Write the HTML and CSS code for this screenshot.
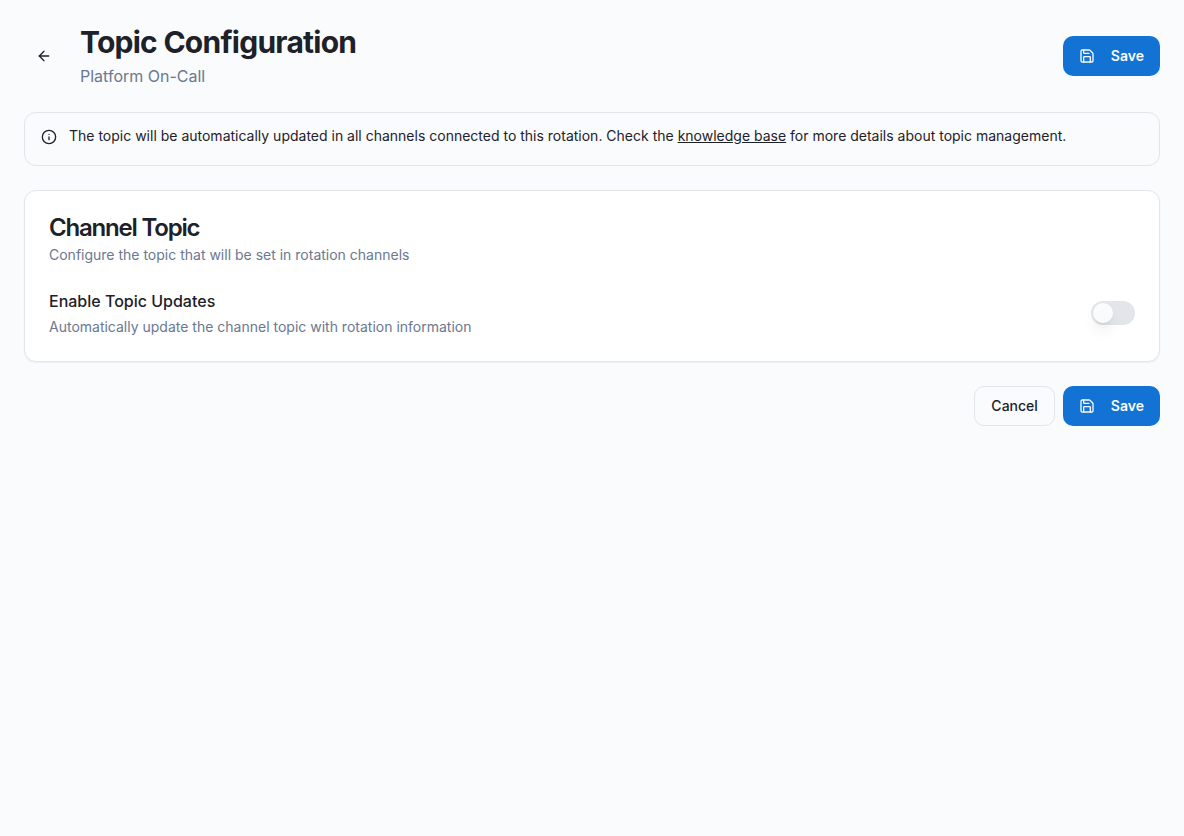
FILE: index.html
```html
<!DOCTYPE html>
<html lang="en">
  <head>
    <meta charset="UTF-8" />
    <title>Topic Configuration</title>
    <link rel="stylesheet" href="styles.css">
  </head>

  <body>
    <main class="page">
      <header class="header">
        <button type="button" class="btn-back" aria-label="Back">
          <svg class="icon" viewBox="0 0 24 24"><path d="m12 19-7-7 7-7" /><path d="M19 12H5" /></svg>
        </button>
        <div class="heading">
          <h1>Topic Configuration</h1>
          <p>Platform On-Call</p>
        </div>
        <button type="button" class="btn btn-primary">
          <svg class="icon" viewBox="0 0 24 24"><path d="M15.2 3a2 2 0 0 1 1.4.6l3.8 3.8a2 2 0 0 1 .6 1.4V19a2 2 0 0 1-2 2H5a2 2 0 0 1-2-2V5a2 2 0 0 1 2-2z" /><path d="M17 21v-7a1 1 0 0 0-1-1H8a1 1 0 0 0-1 1v7" /><path d="M7 3v4a1 1 0 0 0 1 1h7" /></svg>
          Save
        </button>
      </header>

      <div class="alert">
        <svg class="icon" viewBox="0 0 24 24"><circle cx="12" cy="12" r="10" /><path d="M12 16v-4" /><path d="M12 8h.01" /></svg>
        <p>The topic will be automatically updated in all channels connected to this rotation. Check the <a href="#">knowledge base</a> for more details about topic management.</p>
      </div>

      <section class="card">
        <h2>Channel Topic</h2>
        <p class="hint">Configure the topic that will be set in rotation channels</p>
        <div class="setting">
          <div class="setting-text">
            <label for="topic-updates">Enable Topic Updates</label>
            <p class="hint">Automatically update the channel topic with rotation information</p>
          </div>
          <input type="checkbox" role="switch" class="switch" id="topic-updates">
        </div>
      </section>

      <div class="actions">
        <button type="button" class="btn btn-outline">Cancel</button>
        <button type="button" class="btn btn-primary">
          <svg class="icon" viewBox="0 0 24 24"><path d="M15.2 3a2 2 0 0 1 1.4.6l3.8 3.8a2 2 0 0 1 .6 1.4V19a2 2 0 0 1-2 2H5a2 2 0 0 1-2-2V5a2 2 0 0 1 2-2z" /><path d="M17 21v-7a1 1 0 0 0-1-1H8a1 1 0 0 0-1 1v7" /><path d="M7 3v4a1 1 0 0 0 1 1h7" /></svg>
          Save
        </button>
      </div>
    </main>
  </body>
</html>
```

FILE: styles.css
```css
* {
  box-sizing: border-box;
}

body,
h1,
h2,
p {
  margin: 0;
}

body {
  background: #fafbfd;
  color: #1d2129;
  font: 14px/20px Inter, "Liberation Sans", sans-serif;
}

button {
  font: inherit;
  cursor: pointer;
}

.page {
  display: flex;
  flex-direction: column;
  gap: 24px;
  padding: 24px;
}

.icon {
  flex: none;
  width: 16px;
  height: 16px;
  fill: none;
  stroke: currentColor;
  stroke-width: 2;
  stroke-linecap: round;
  stroke-linejoin: round;
}

.header {
  display: flex;
  align-items: center;
  gap: 16px;
}

.heading {
  flex: 1;
}

.heading h1 {
  font-size: 30px;
  line-height: 36px;
  font-weight: 700;
  letter-spacing: -0.025em;
}

.heading p {
  margin-top: 4px;
  font-size: 16px;
  line-height: 24px;
  color: #6b7890;
}

.btn-back {
  display: flex;
  align-items: center;
  justify-content: center;
  width: 40px;
  height: 40px;
  padding: 0;
  border: 0;
  border-radius: 10px;
  background: none;
  color: inherit;
}

.btn {
  display: flex;
  align-items: center;
  gap: 16px;
  height: 40px;
  padding: 0 16px;
  border: 0;
  border-radius: 10px;
  font-weight: 500;
}

.btn-primary {
  background: #1273d4;
  color: #fafbfd;
  font-weight: 600;
}

.btn-outline {
  border: 1px solid #e2e5e9;
  background: #fafbfd;
  color: inherit;
}

.alert {
  display: flex;
  gap: 12px;
  padding: 12px 16px 18px;
  border: 1px solid #e2e5e9;
  border-radius: 12px;
  line-height: 22px;
}

.alert .icon {
  margin-top: 4px;
}

.alert a {
  color: inherit;
  text-decoration: underline;
}

.card {
  padding: 24px;
  border: 1px solid #e2e5e9;
  border-radius: 12px;
  background: #fff;
  box-shadow: 0 1px 2px rgba(0, 0, 0, 0.05);
}

.card h2 {
  font-size: 24px;
  line-height: 26px;
  font-weight: 600;
  letter-spacing: -0.05em;
}

.hint {
  margin-top: 4px;
  color: #6b7890;
}

.setting {
  display: flex;
  align-items: center;
  justify-content: space-between;
  margin-top: 24px;
}

.setting label {
  font-size: 16px;
  line-height: 24px;
  font-weight: 500;
}

.switch {
  appearance: none;
  flex: none;
  width: 44px;
  height: 24px;
  margin: 0;
  padding: 2px;
  border-radius: 12px;
  background: #e2e5e9;
  cursor: pointer;
}

.switch::before {
  content: "";
  display: block;
  width: 20px;
  height: 20px;
  border-radius: 50%;
  background: #fafbfd;
  box-shadow: 0 10px 15px -3px rgba(0, 0, 0, 0.1), 0 4px 6px -4px rgba(0, 0, 0, 0.1);
}

.switch:checked {
  background: #1273d4;
}

.switch:checked::before {
  margin-left: 20px;
}

.actions {
  display: flex;
  justify-content: flex-end;
  gap: 8px;
}
```
